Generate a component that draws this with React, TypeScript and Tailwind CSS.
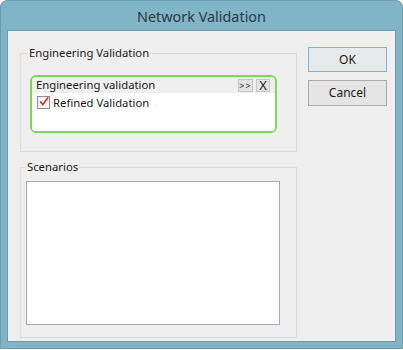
import React from "react";

const font = { fontFamily: '"Noto Sans", "Open Sans", sans-serif' };

function Check() {
  return (
    <span className="flex h-[13px] w-[13px] items-center justify-center border border-[#8f8f8f] bg-[#f4f4f4]">
      <svg width="13" height="13" viewBox="0 0 13 13" className="-mt-[3px] ml-[1px]">
        <path d="M2 7 L5 10.5 L11.5 1.5" fill="none" stroke="#d23a2e" strokeWidth="2.2" strokeLinecap="round" strokeLinejoin="round" />
      </svg>
    </span>
  );
}

export default function App() {
  return (
    <div className="w-[403px] h-[350px] bg-white" style={font}>
      <div className="flex h-[349px] w-[403px] flex-col rounded-t-[7px] border border-[#6b9dae] bg-[#80b4c6]">
        <div className="flex h-[29px] items-center justify-center pt-[2px] text-[14.4px] text-[#2a3a42]">
          Network Validation
        </div>
        <div className="mx-[6px] flex h-[312px] border border-[#6e9cab] bg-[#efefef] text-[11.3px] text-[#1a1a1a]">
          <div className="ml-[12px] flex w-[277px] flex-col">
            <fieldset className="mt-[14px] h-[107px] border border-[#dadada] px-0">
              <legend className="ml-[7px] px-[1px] leading-[16px]">Engineering Validation</legend>
              <div className="ml-[9px] mt-[14px] flex h-[58px] w-[247px] flex-col overflow-hidden rounded-[6px] border-2 border-[#7dd957]">
                <div className="flex h-[16px] items-center justify-between bg-[#efefef] pl-[4px] pr-[5px]">
                  <span className="leading-[14px]">Engineering validation</span>
                  <div className="flex gap-[3px]">
                    <span className="flex h-[13px] w-[15px] items-center justify-center border border-[#c6c6c6] bg-[#e4e4e4] text-[9px] leading-none tracking-[1px]">&gt;&gt;</span>
                    <span className="flex h-[13px] w-[14px] items-center justify-center border border-[#c6c6c6] bg-[#e4e4e4] text-[13px] leading-none">X</span>
                  </div>
                </div>
                <div className="flex-1 bg-white pl-[5px] pt-[2px]">
                  <div className="flex items-center gap-[3px]">
                    <Check />
                    <span className="leading-[15px]">Refined Validation</span>
                  </div>
                </div>
              </div>
            </fieldset>
            <fieldset className="mt-[7px] h-[179px] border border-[#dadada] px-[5px]">
              <legend className="ml-[0px] px-[1px] leading-[16px]">Scenarios</legend>
              <div className="mt-[6px] h-[144px] w-[254px] border border-[#a9a9b6] bg-white" />
            </fieldset>
          </div>
          <div className="ml-[11px] flex flex-col gap-[8px] pt-[16px]">
            <button className="h-[25px] w-[79px] border border-[#7eb4ea] bg-[#e7e9eb] text-[12px] text-[#1a1a1a]">OK</button>
            <button className="h-[26px] w-[79px] border border-[#acacac] bg-[#e5e5e5] text-[12px] text-[#1a1a1a]">Cancel</button>
          </div>
        </div>
      </div>
    </div>
  );
}
